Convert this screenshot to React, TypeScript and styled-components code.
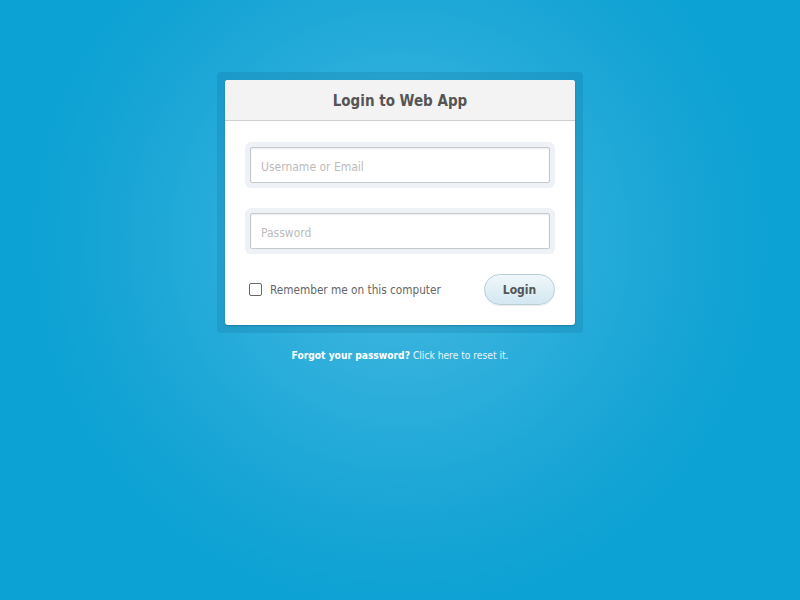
import React from "react";
import styled, { createGlobalStyle } from "styled-components";

const Global = createGlobalStyle`
  html, body { margin: 0; padding: 0; height: 100%; }
  body {
    font-family: "DejaVu Sans Condensed", "DejaVu Sans", sans-serif;
    background: radial-gradient(circle 370px at 400px 240px, #42b9e0 0%, #31b0dc 35%, #1aa6d6 72%, #0ca2d3 100%) #0ca2d3;
    min-height: 600px;
  }
  #root { min-height: 600px; }
`;

const Page = styled.div`
  display: flex;
  flex-direction: column;
  align-items: center;
  padding-top: 72px;
`;

const Frame = styled.div`
  padding: 8px;
  border-radius: 4px;
  background: rgba(0, 60, 100, 0.12);
`;

const Card = styled.form`
  width: 350px;
  background: #fff;
  border-radius: 3px;
  box-shadow: 0 1px 2px rgba(0, 0, 0, 0.2);
  overflow: hidden;
`;

const Header = styled.div`
  height: 41px;
  box-sizing: border-box;
  padding-top: 2px;
  background: #f3f3f3;
  border-bottom: 1px solid #cfcfcf;
  display: flex;
  align-items: center;
  justify-content: center;
  font-size: 15px;
  font-weight: bold;
  color: #555;
`;

const Body = styled.div`
  padding: 21px 20px 20px;
  display: flex;
  flex-direction: column;
  gap: 20px;
`;

const FieldWrap = styled.div`
  padding: 5px;
  background: #eef2f6;
  border-radius: 6px;
  display: flex;
`;

const Input = styled.input`
  flex: 1;
  height: 36px;
  box-sizing: border-box;
  border: 1px solid #c6c9cc;
  border-radius: 2px;
  padding: 3px 10px 0;
  font-family: inherit;
  font-size: 12px;
  color: #555;
  background: #fff;
  box-shadow: inset 0 1px 2px rgba(0, 0, 0, 0.08);
  outline: none;
  &::placeholder { color: #bbb; }
`;

const Row = styled.div`
  display: flex;
  align-items: center;
  justify-content: space-between;
`;

const Remember = styled.label`
  display: flex;
  align-items: center;
  gap: 8px;
  padding-left: 4px;
  font-size: 11.7px;
  color: #666;
`;

const Box = styled.span`
  width: 11px;
  height: 11px;
  border: 1px solid #666;
  border-radius: 2px;
  background: #fff;
`;

const LoginButton = styled.button`
  width: 71px;
  height: 31px;
  border-radius: 16px;
  border: 1px solid #b9cdd6;
  background: linear-gradient(#f0f7fa, #d2e8f2);
  box-shadow: 0 1px 1px rgba(0, 0, 0, 0.08);
  font-family: inherit;
  font-size: 12px;
  font-weight: bold;
  color: #555;
  padding: 0;
`;

const Forgot = styled.div`
  margin-top: 17px;
  font-size: 10.2px;
  color: #e6f4fb;
  strong { color: #fff; }
`;

export default function App() {
  return (
    <>
      <Global />
      <Page>
        <Frame>
          <Card onSubmit={(e) => e.preventDefault()}>
            <Header>Login to Web App</Header>
            <Body>
              <FieldWrap>
                <Input placeholder="Username or Email" />
              </FieldWrap>
              <FieldWrap>
                <Input type="password" placeholder="Password" />
              </FieldWrap>
              <Row>
                <Remember>
                  <Box />
                  Remember me on this computer
                </Remember>
                <LoginButton type="submit">Login</LoginButton>
              </Row>
            </Body>
          </Card>
        </Frame>
        <Forgot>
          <strong>Forgot your password?</strong> Click here to reset it.
        </Forgot>
      </Page>
    </>
  );
}
